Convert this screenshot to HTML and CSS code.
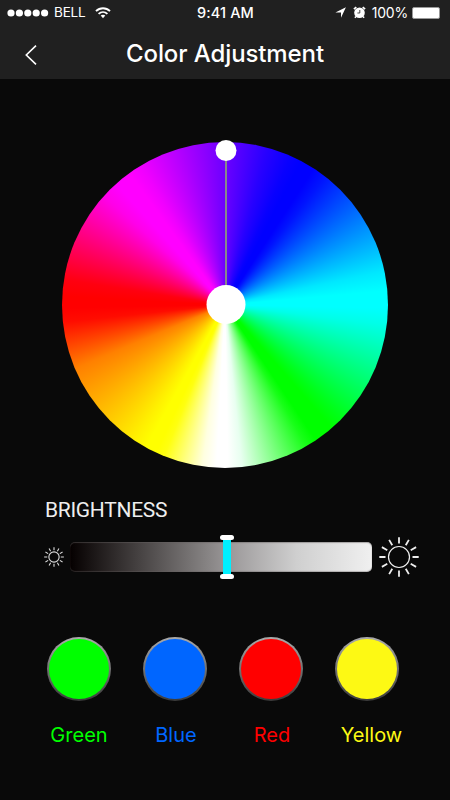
FILE: index.html
```html
<!DOCTYPE html>
<html lang="en">
<head>
  <meta charset="UTF-8">
  <title>Color Adjustment</title>
  <link rel="stylesheet" href="styles.css">
</head>
<body>

  <header>
    <div class="status">
      <div class="carrier">
        <svg class="dots" width="42" height="8" viewBox="0 0 42 8" fill="#fff">
          <circle cx="4" cy="4" r="3.6"/><circle cx="12.4" cy="4" r="3.6"/><circle cx="20.8" cy="4" r="3.6"/><circle cx="29.2" cy="4" r="3.6"/><circle cx="37.6" cy="4" r="3.6"/>
        </svg>
        <span class="network">BELL</span>
        <svg class="wifi" width="16" height="12" viewBox="0 0 16 12" fill="none" stroke="#fff" stroke-width="1.9">
          <path d="M1 4.1C5 .2 11 .2 15 4.1"/>
          <path d="M3.6 6.9C6.2 4.5 9.8 4.5 12.4 6.9"/>
          <path d="M5.7 8.6C7 7.4 9 7.4 10.3 8.6L8 11.2Z" fill="#fff" stroke="none"/>
        </svg>
      </div>
      <span class="time">9:41 AM</span>
      <div class="power">
        <svg width="11" height="11" viewBox="0 0 11 11" fill="#fff"><path d="M10.9.2L6 10.7V5.6H.4Z"/></svg>
        <svg class="alarm" width="13" height="13" viewBox="0 0 13 13">
          <path d="M.9 3.2L3.3 1.1M12.1 3.2L9.7 1.1M3 10.5L1.9 11.7M10 10.5L11.1 11.7" stroke="#fff" stroke-width="1.7"/>
          <circle cx="6.5" cy="6.7" r="5.3" fill="#fff"/>
          <path d="M6.8 4V7H4.4" fill="none" stroke="#333" stroke-width=".9"/>
        </svg>
        <span class="percent">100%</span>
        <span class="battery"></span>
      </div>
    </div>
    <div class="titlebar">
      <svg class="back" width="12" height="20" viewBox="0 0 12 20" fill="none" stroke="#fff" stroke-width="1.6"><path d="M11 .7L1.3 10L11 19.3"/></svg>
      <h1>Color Adjustment</h1>
    </div>
  </header>

  <!-- Color wheel -->
  <div class="wheel">
    <span class="needle"></span>
    <span class="knob"></span>
    <span class="hub"></span>
  </div>

  <!-- Brightness -->
  <section>
    <h2>BRIGHTNESS</h2>
    <div class="brightness">
      <svg class="sun-small" width="20" height="20" viewBox="-20 -20 40 40" fill="none" stroke="#ddd" stroke-width="2.2">
        <circle r="10.3"/>
        <path id="rays" d="M0-13.5V-19.7M0 13.5V19.7M13.5 0H19.7M-13.5 0H-19.7M6.75-11.7L9.85-17.1M11.7-6.75L17.1-9.85M11.7 6.75L17.1 9.85M6.75 11.7L9.85 17.1M-6.75 11.7L-9.85 17.1M-11.7 6.75L-17.1 9.85M-11.7-6.75L-17.1-9.85M-6.75-11.7L-9.85-17.1"/>
      </svg>
      <div class="track"><span class="handle"></span></div>
      <svg class="sun-big" width="40" height="40" viewBox="-20 -20 40 40" fill="none" stroke="#eee">
        <circle r="10.5" stroke-width="1.2"/>
        <use href="#rays" stroke-width="1.8"/>
      </svg>
    </div>
  </section>

  <!-- Presets -->
  <div class="presets">
    <div class="preset green"><span class="swatch"></span><span class="label">Green</span></div>
    <div class="preset blue"><span class="swatch"></span><span class="label">Blue</span></div>
    <div class="preset red"><span class="swatch"></span><span class="label">Red</span></div>
    <div class="preset yellow"><span class="swatch"></span><span class="label">Yellow</span></div>
  </div>

</body>
</html>
```

FILE: styles.css
```css
body {
  margin: 0;
  width: 450px;
  height: 800px;
  overflow: hidden;
  background: #090909;
  color: #fff;
  font-family: Inter, "Liberation Sans", sans-serif;
}
header {
  height: 79px;
  background: #202020;
}
.status {
  display: grid;
  grid-template-columns: 1fr auto 1fr;
  align-items: center;
  height: 25px;
  padding: 0 10px 0 7px;
  font-size: 14px;
  line-height: 25px;
}
.carrier, .power {
  display: flex;
  align-items: center;
}
.power {
  justify-content: flex-end;
}
.network {
  margin-left: 5px;
  font-size: 13.5px;
  letter-spacing: -0.2px;
}
.wifi {
  margin-left: 10px;
}
.time {
  margin-left: 4px;
  font-weight: 500;
  font-size: 14.5px;
  letter-spacing: 0.1px;
}
.alarm {
  margin-left: 7px;
}
.percent {
  margin: 0 4px 0 6px;
  letter-spacing: -0.2px;
}
.battery {
  box-sizing: border-box;
  width: 28px;
  height: 12px;
  background: #fff;
  border: 1px solid #999;
  border-radius: 2px;
}
.titlebar {
  display: grid;
  grid-template-columns: 37px 1fr 37px;
  align-items: center;
  height: 54px;
}
.back {
  justify-self: end;
  margin-top: 5px;
}
h1 {
  margin: 3px 0 0;
  font-size: 24px;
  line-height: 30px;
  font-weight: 500;
  letter-spacing: -0.1px;
  text-align: center;
}
.wheel {
  position: relative;
  width: 326px;
  height: 326px;
  margin: 63px 0 0 62.3px;
  border-radius: 50%;
  background: conic-gradient(#6c00ff 0deg, #2800ff 15deg, #0800ff 24deg, #0000ff 28deg, #0000ff 33deg, #0014ff 38deg, #00e8ff 78deg, #00ffff 85deg, #00ffff 91deg, #00ffe8 97deg, #00ff18 134deg, #00ff00 139deg, #00ff00 146deg, #18ff18 150deg, #e8fff0 174deg, #fff 179deg, #fff 183deg, #ffffe0 188deg, #ffff10 202deg, #ffff00 205deg, #ffff00 209deg, #fff000 214deg, #ff8000 247deg, #ff0c00 264deg, #ff0000 269deg, #ff0000 273deg, #ff0010 279deg, #ff00e8 312deg, #ff00ff 318deg, #ff00ff 324deg, #f000ff 329deg, #6c00ff 360deg);
}
.needle, .knob, .hub {
  position: absolute;
  left: calc(50% + 0.4px);
  transform: translateX(-50%);
}
.needle {
  top: 9px;
  width: 2px;
  height: 150px;
  background: #888;
}
.knob {
  top: -2px;
  width: 21px;
  height: 21px;
  border-radius: 50%;
  background: #fff;
}
.hub {
  top: 143px;
  width: 39px;
  height: 39px;
  border-radius: 50%;
  background: #fff;
}
h2 {
  margin: 29px 0 0 45px;
  font-family: Roboto, sans-serif;
  font-size: 21px;
  line-height: 26px;
  font-weight: 400;
  letter-spacing: -0.3px;
  color: #eee;
}
.brightness {
  display: flex;
  align-items: center;
  height: 40px;
  margin: 14px 0 0 43.5px;
}
.track {
  position: relative;
  width: 302px;
  height: 30px;
  margin: 0 7px 0 6.5px;
  border-radius: 5px;
  background: linear-gradient(to right, #050000, #858282 45%, #999697 52%, #cfcfcf 75%, #f0f0f0);
  box-shadow: inset 0 1px 1px rgba(100, 95, 95, 0.5), inset 0 -1px 1px rgba(100, 95, 95, 0.4);
}
.handle {
  position: absolute;
  top: -5px;
  left: 153px;
  width: 8px;
  height: 40px;
  background: #00f0ff;
}
.handle::before, .handle::after {
  content: "";
  position: absolute;
  left: -3px;
  width: 14px;
  height: 5px;
  border-radius: 2.5px;
  background: #fff;
}
.handle::before {
  top: -2px;
}
.handle::after {
  bottom: -2px;
}
.presets {
  display: flex;
  gap: 32px;
  margin: 60px 0 0 47px;
}
.preset {
  display: flex;
  flex-direction: column;
  align-items: center;
  width: 64px;
}
.swatch {
  box-sizing: border-box;
  width: 64px;
  height: 64px;
  border: 2px solid transparent;
  border-radius: 50%;
  background: linear-gradient(currentColor, currentColor) padding-box, linear-gradient(#aaa, #3a3a3a) border-box;
}
.label {
  margin-top: 21px;
  font-size: 20px;
  line-height: 26px;
}
.green {
  color: #00ff00;
}
.blue {
  color: #0066ff;
}
.red {
  color: #ff0000;
}
.yellow {
  color: #fdf914;
}
.blue .label, .red .label {
  margin-left: 2px;
}
.yellow .label {
  margin-left: 9px;
}
```
